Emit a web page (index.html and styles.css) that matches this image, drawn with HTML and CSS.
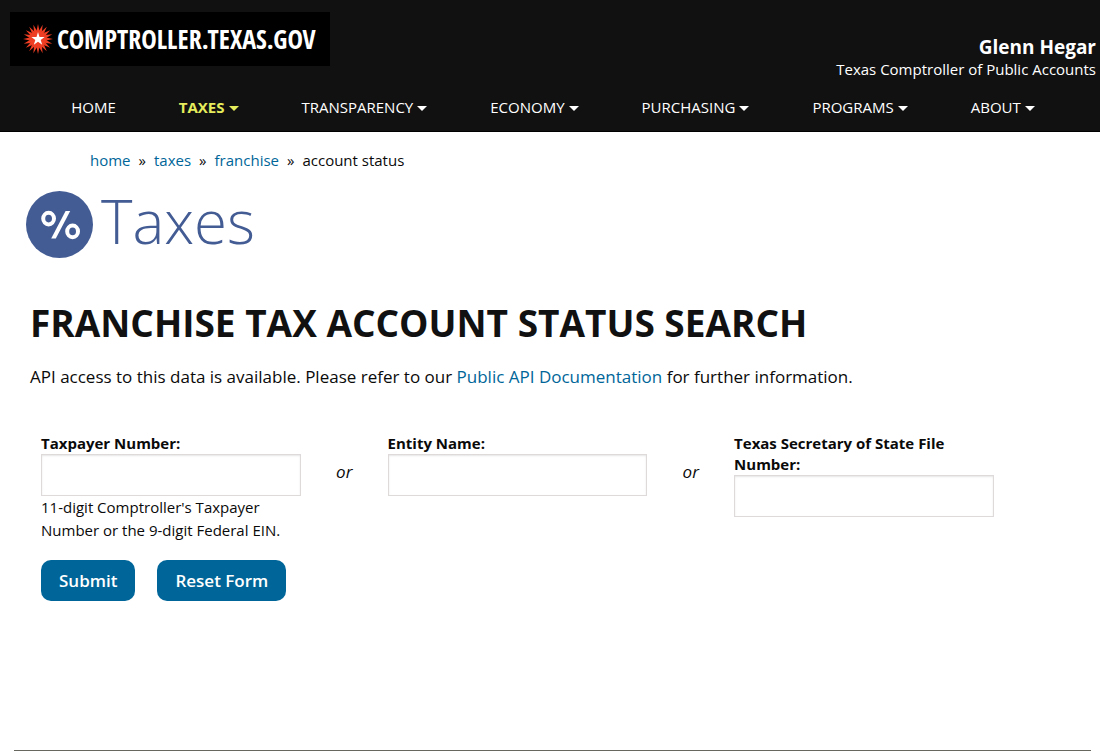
FILE: index.html
```
<!DOCTYPE html>
<html lang="en">
<head>
    <meta charset="UTF-8">
    <meta name="viewport" content="width=device-width, initial-scale=1.0">
    <title>Franchise Tax Account Status Search</title>
    <link rel="stylesheet" href="styles.css">
</head>
<body>
    <header class="site-header">
        <div class="masthead">
            <a href="#" class="logo">
                <svg class="logo-star" viewBox="-50 -50 100 100" aria-hidden="true">
                    <g fill="#ee3e23">
                        <circle r="29"/>
                        <path id="rays" d="M-5-27L0-50L5-27ZM-5 27L0 50L5 27ZM-27-5L-50 0L-27 5ZM27-5L50 0L27 5Z"/>
                        <use href="#rays" transform="rotate(18)"/>
                        <use href="#rays" transform="rotate(36)"/>
                        <use href="#rays" transform="rotate(54)"/>
                        <use href="#rays" transform="rotate(72)"/>
                    </g>
                    <path fill="#fff" d="M0-23L5-7H22L9 3L14 19L0 9L-14 19L-9 3L-22-7H-5Z"/>
                </svg>
                <span>COMPTROLLER.TEXAS.GOV</span>
            </a>
            <div class="official">
                <strong>Glenn Hegar</strong>
                <span>Texas Comptroller of Public Accounts</span>
            </div>
        </div>
        <nav class="main-nav">
            <ul>
                <li><a href="#">HOME</a></li>
                <li class="dropdown active"><a href="#">TAXES</a></li>
                <li class="dropdown"><a href="#">TRANSPARENCY</a></li>
                <li class="dropdown"><a href="#">ECONOMY</a></li>
                <li class="dropdown"><a href="#">PURCHASING</a></li>
                <li class="dropdown"><a href="#">PROGRAMS</a></li>
                <li class="dropdown"><a href="#">ABOUT</a></li>
            </ul>
        </nav>
    </header>

    <ul class="breadcrumbs">
        <li><a href="#">home</a></li>
        <li><a href="#">taxes</a></li>
        <li><a href="#">franchise</a></li>
        <li>account status</li>
    </ul>

    <div class="section-title">
        <svg class="section-icon" viewBox="0 0 67 67" aria-hidden="true">
            <circle cx="33.5" cy="33.5" r="33.5" fill="#435c94"/>
            <g fill="none" stroke="#fff" stroke-width="4">
                <ellipse cx="22.6" cy="27.6" rx="5.4" ry="5.8"/>
                <ellipse cx="46.6" cy="40.4" rx="5.4" ry="5.8"/>
            </g>
            <path fill="#fff" d="M39.6 20H44.2L29.8 47.4H25.2Z"/>
        </svg>
        <span>Taxes</span>
    </div>

    <main>
        <h1>FRANCHISE TAX ACCOUNT STATUS SEARCH</h1>
        <p class="intro">API access to this data is available. Please refer to our <a href="#">Public API Documentation</a> for further information.</p>

        <form class="search-form">
            <div class="fields">
                <div class="field">
                    <label for="taxpayer">Taxpayer Number:</label>
                    <input type="text" id="taxpayer" aria-describedby="taxpayer-hint">
                    <p class="hint" id="taxpayer-hint">11-digit Comptroller's Taxpayer Number or the 9-digit Federal EIN.</p>
                </div>
                <em class="or">or</em>
                <div class="field">
                    <label for="entity">Entity Name:</label>
                    <input type="text" id="entity">
                </div>
                <em class="or">or</em>
                <div class="field">
                    <label for="file-number">Texas Secretary of State File Number:</label>
                    <input type="text" id="file-number">
                </div>
            </div>
            <div class="buttons">
                <button type="submit">Submit</button>
                <button type="reset">Reset Form</button>
            </div>
        </form>
    </main>

    <hr class="divider">
</body>
</html>
```
FILE: styles.css
```
* {
    margin: 0;
    padding: 0;
    box-sizing: border-box;
}

body {
    font-family: "Open Sans", "Noto Sans", sans-serif;
    font-size: 17px;
    line-height: 24px;
    color: #0a0a0a;
    background: #fff;
}

a {
    color: #006699;
    text-decoration: none;
}

ul {
    list-style: none;
}

/* Header */
.site-header {
    background: #111;
    color: #fff;
    border-bottom: 1px solid #000;
}

.masthead {
    display: flex;
    justify-content: space-between;
    padding: 12px 4px 0 10px;
}

.logo {
    display: flex;
    align-items: center;
    gap: 4px;
    height: 54px;
    padding: 0 14px 0 13px;
    background: #000;
    color: #fff;
    font-family: "Liberation Sans Narrow", "Open Sans Condensed", "Liberation Sans", sans-serif;
    font-size: 26px;
    font-weight: 700;
}

.logo-star {
    width: 30px;
    height: 30px;
}

.official {
    display: flex;
    flex-direction: column;
    padding-top: 24px;
    font-size: 15px;
    line-height: 22px;
    text-align: right;
}

.official strong {
    font-size: 19px;
}

.main-nav ul {
    display: flex;
    justify-content: center;
    gap: 63px;
    padding: 15px 0 12px 6px;
    font-size: 15px;
}

.main-nav a {
    display: flex;
    align-items: center;
    gap: 4px;
    color: #fff;
}

.dropdown a::after {
    content: "";
    margin-top: 3px;
    border: 5px solid transparent;
    border-top-color: currentColor;
    border-bottom: 0;
}

.active a {
    color: #e6ed5c;
    font-weight: 700;
}

/* Breadcrumbs */
.breadcrumbs {
    display: flex;
    padding: 16px 90px;
    font-size: 15px;
}

.breadcrumbs li + li::before {
    content: "»";
    margin: 0 8px;
}

/* Section title */
.section-title {
    display: flex;
    gap: 8px;
    padding: 3px 26px 0;
    color: #435c94;
    font-size: 60px;
    font-weight: 300;
    line-height: 60px;
}

.section-icon {
    width: 67px;
    height: 67px;
}

/* Search form */
h1 {
    padding: 41px 30px 0;
    color: #111;
    font-size: 37px;
    font-weight: 700;
    line-height: 48px;
}

.intro {
    padding: 18px 30px 0;
}

.search-form {
    padding: 44px 106px 0 41px;
}

.fields {
    display: grid;
    grid-template-columns: 3fr 1fr 3fr 1fr 3fr;
}

.field label {
    display: block;
    font-size: 15px;
    font-weight: 700;
    line-height: 21px;
}

.field input {
    display: block;
    width: 100%;
    height: 42px;
    padding: 8px;
    border: 1px solid #dedad9;
    box-shadow: inset 0 1px 2px rgba(0, 0, 0, 0.1);
    font: inherit;
}

.or {
    padding-top: 27px;
    text-align: center;
}

.hint {
    font-size: 15px;
    line-height: 23px;
}

.buttons {
    display: flex;
    gap: 22px;
    padding-top: 18px;
}

.buttons button {
    padding: 9px 18px 8px;
    border: 0;
    border-radius: 10px;
    background: #006699;
    color: #fff;
    font: inherit;
    font-weight: 600;
    cursor: pointer;
}

.divider {
    margin: 149px 9px 0 14px;
    border: 0;
    border-top: 1px solid #68675f;
}
```
